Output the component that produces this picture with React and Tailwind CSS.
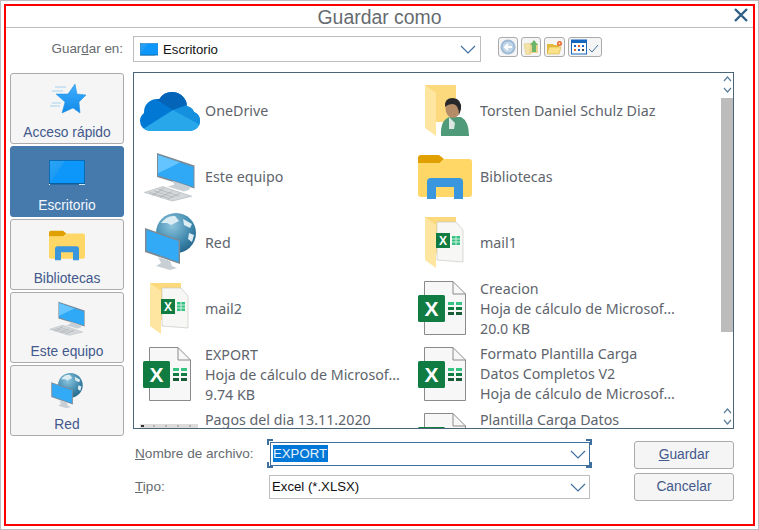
import React from "react";

const Chevron = () => (
  <svg width="16" height="9" viewBox="0 0 16 9" className="shrink-0">
    <polyline points="1,1 8,8 15,1" fill="none" stroke="#3f70a0" strokeWidth="1.2" />
  </svg>
);

const ScrollChevron = ({ up }) => (
  <svg width="9" height="6" viewBox="0 0 9 6">
    <polyline points={up ? "1,5 4.5,1 8,5" : "1,1 4.5,5 8,1"} fill="none" stroke="#5b7f9f" strokeWidth="1.2" />
  </svg>
);

const Desktop = ({ w = 36, h = 25 }) => (
  <svg width={w} height={h} viewBox="0 0 36 25">
    <defs>
      <linearGradient id="desk" x1="0" y1="0" x2="1" y2="1">
        <stop offset="0" stopColor="#2aa5f5" />
        <stop offset="1" stopColor="#0a8cf0" />
      </linearGradient>
    </defs>
    <rect x="0.5" y="0.5" width="35" height="23" fill="url(#desk)" stroke="#0b6cb5" />
    <polygon points="1,23 16,1 35,1 35,23" fill="#0d97fb" />
    <rect x="0" y="23" width="36" height="1.5" fill="#0a5f9f" />
    <rect x="0" y="24" width="1" height="1" fill="#fff" />
    <rect x="30" y="24" width="6" height="1" fill="#cfe6f7" />
  </svg>
);

const Computer = ({ w = 54, h = 50 }) => (
  <svg width={w} height={h} viewBox="0 0 55 52">
    <polygon points="14,1 53,14 53,38 14,26" fill="#7c8a94" />
    <polygon points="15,3 52,15.5 52,36.5 15,24.5" fill="#2fa8f5" />
    <polygon points="15,3 38,11 15,22" fill="#63c4ff" />
    <polygon points="30,30 48,36 48,39 42,41 25,36 32,34" fill="#c9d0d5" />
    <polygon points="1,42 20,36 50,46 30,51" fill="#d5d8da" stroke="#aab0b4" strokeWidth="0.6" />
    <path d="M6 42 L26 48 M11 40.5 L31 47 M16 39 L37 46 M9 45 L21 38 M17 47 L30 41 M25 49 L38 43" stroke="#a0a6aa" strokeWidth="0.6" />
  </svg>
);

const Network = ({ w = 55, h = 60 }) => (
  <svg width={w} height={h} viewBox="0 0 55 60">
    <defs>
      <radialGradient id="globe" cx="0.4" cy="0.3" r="0.8">
        <stop offset="0" stopColor="#8fc6df" />
        <stop offset="0.6" stopColor="#3f88ad" />
        <stop offset="1" stopColor="#1f5f85" />
      </radialGradient>
    </defs>
    <circle cx="33" cy="20" r="20" fill="url(#globe)" />
    <path d="M18 10 Q24 2 32 3 L36 8 L28 12 L24 10 Z M40 6 L49 11 L47 15 L41 12 Z M46 20 L51 22 L49 29 L45 26 Z" fill="#dcecf3" />
    <polygon points="2,15 37,27 37,51 2,39" fill="#7c8a94" />
    <polygon points="3.5,17 35.5,28 35.5,49 3.5,37.5" fill="#33aaf6" />
    <polygon points="15,44 27,48 29,53 34,55 27,57 13,53 18,50" fill="#c9d0d5" />
  </svg>
);

const Cloud = () => (
  <svg width="60" height="39" viewBox="0 0 60 39">
    <defs>
      <clipPath id="cloud">
        <circle cx="32" cy="15" r="15" />
        <circle cx="17" cy="20" r="13" />
        <circle cx="10" cy="29" r="10" />
        <circle cx="50" cy="29" r="10" />
        <circle cx="45" cy="24" r="10" />
        <rect x="10" y="15" width="40" height="24" />
      </clipPath>
    </defs>
    <g clipPath="url(#cloud)">
      <rect width="60" height="39" fill="#0078d4" />
      <polygon points="14,0 60,0 60,14 47,13 33,18 17,8" fill="#0364b8" />
      <polygon points="33,18 47,13 60,22 60,35" fill="#1490df" />
      <polygon points="33,18 60,33 60,39 8,39 3,37" fill="#28a8ea" />
    </g>
  </svg>
);

const Star = () => (
  <svg width="37" height="30" viewBox="0 0 37 30">
    <defs>
      <linearGradient id="star" x1="0" y1="0" x2="0" y2="1">
        <stop offset="0" stopColor="#3fb0ff" />
        <stop offset="1" stopColor="#1289e8" />
      </linearGradient>
    </defs>
    <path d="M6 3 H17 M3 7 H14 M3 19 H12 M1 22 H11" stroke="#a8d2ee" strokeWidth="1" />
    <polygon points="26,0 28,10 37,11 30,18 31,29 24,24 13,29 16,18 7,10 19,10" fill="url(#star)" stroke="#1c8fe0" strokeWidth="0.5" />
  </svg>
);

const Libraries = ({ w = 54, h = 44 }) => (
  <svg width={w} height={h} viewBox="0 0 54 44">
    <path d="M0 3 a3 3 0 0 1 3 -3 H21 L26 4 L21 9 H0 Z" fill="#dfa000" />
    <path d="M0 8 H22 L26 4 H51 a3 3 0 0 1 3 3 V39 a3 3 0 0 1 -3 3 H3 a3 3 0 0 1 -3 -3 Z" fill="#ffd766" />
    <path d="M9 44 V27 a4 4 0 0 1 4 -4 H41 a4 4 0 0 1 4 4 V44 H36 V32 H18 V44 Z" fill="#3a96dd" />
  </svg>
);

const FolderBack = () => (
  <>
    <polygon points="0,0 31,0 31,37 11,37" fill="#fcd97c" />
    <polygon points="0,0 11,8 11,51 0,43" fill="#fee6a0" />
  </>
);

const UserFolder = () => (
  <svg width="45" height="52" viewBox="0 0 45 52">
    <FolderBack />
    <path d="M16 51 Q15 36 24 32 H36 Q44 36 44 51 Z" fill="#4f9a78" />
    <polygon points="24,32 30,38 29,44 24,44" fill="#dbe7e2" />
    <ellipse cx="28" cy="24" rx="7.5" ry="9" fill="#b48c68" />
    <path d="M20 22 Q19 13 28 13 Q37 14 36 24 L34 30 Q34 20 28 19 Q23 19 20 22 Z" fill="#26282a" />
  </svg>
);

const XlsxFolder = () => (
  <svg width="40" height="52" viewBox="0 0 40 52">
    <FolderBack />
    <polygon points="12,5 31,5 38,13 38,45 12,43" fill="#f7f7f5" stroke="#c8c8c4" strokeWidth="0.7" />
    <rect x="11" y="16" width="14" height="15" fill="#107c41" />
    <text x="18" y="28" textAnchor="middle" fontSize="12" fontWeight="700" fill="#fff" fontFamily="Liberation Sans">X</text>
    <path d="M27 19 H35 V28 H27 Z" fill="#33c481" />
    <path d="M27 22 H35 M27 25 H35 M31 19 V28" stroke="#f7f7f5" strokeWidth="0.8" />
  </svg>
);

const Excel = () => (
  <svg width="48" height="54" viewBox="0 0 48 54" className="shrink-0 -translate-y-[1px]">
    <path d="M6.5 0.5 H35 L47.5 13 V53.5 H6.5 Z" fill="#f7f7f7" stroke="#8a8a8a" />
    <path d="M35 0.5 V13 H47.5" fill="none" stroke="#8a8a8a" />
    <rect x="0" y="14" width="27" height="27" rx="1.5" fill="#107c41" />
    <text x="13.5" y="34.5" textAnchor="middle" fontSize="21" fontWeight="700" fill="#fff" fontFamily="Liberation Sans">X</text>
    <rect x="30" y="21" width="6" height="3" fill="#33c481" />
    <rect x="38" y="21" width="6" height="3" fill="#33c481" />
    <rect x="30" y="26" width="6" height="3" fill="#107c41" />
    <rect x="38" y="26" width="6" height="3" fill="#107c41" />
    <rect x="30" y="31" width="6" height="3" fill="#185c37" />
    <rect x="38" y="31" width="6" height="3" fill="#185c37" />
  </svg>
);

const Ruler = () => (
  <svg width="58" height="54" viewBox="0 0 58 54" className="shrink-0 translate-y-[8px]">
    <rect x="0" y="2" width="58" height="50" fill="#f4f4f4" />
    <rect x="0" y="2" width="58" height="4" fill="#dcdcdc" />
    <rect x="1" y="3" width="3" height="2" fill="#333" />
    <path d="M14 3 V5 M26 3 V5 M38 3 V5 M50 3 V5" stroke="#888" strokeWidth="1" />
  </svg>
);

const SideButton = ({ label, active, children }) => (
  <div
    className={`h-[71px] rounded-[3px] border flex flex-col items-center ${
      active ? "bg-[#4679ac] border-[#4679ac] text-[#f2f7fb]" : "bg-[#f5f5f5] border-[#ababab] text-[#43598c]"
    }`}
  >
    <div className="h-[50px] w-full flex items-center justify-center">{children}</div>
    <div className="h-[18px] text-[13.8px] leading-[18px]">{label}</div>
  </div>
);

// top: the row runs past the bottom of the list, so its text hangs from the top
const FileItem = ({ icon, lines, top, raise }) => (
  <div className="h-[66px] flex items-center">
    <div className="w-[65px] shrink-0 flex items-center">{icon}</div>
    <div
      className={`text-[14.25px] leading-[20px] text-[#5e646c] whitespace-nowrap ${top ? "self-start pt-[2px]" : ""} ${
        raise ? "pb-[2px]" : ""
      }`}
    >
      {lines.map((line) => (
        <div key={line}>{line}</div>
      ))}
    </div>
  </div>
);

const ToolButton = ({ className, children }) => (
  <div className={`h-[20px] rounded-[3px] border border-[#ababab] bg-[#f5f5f5] flex items-center justify-center ${className}`}>
    {children}
  </div>
);

const Bracket = ({ className }) => <span className={`absolute w-[6px] h-[6px] border-[#3f6f9f] ${className}`} />;

export default function App() {
  return (
    <div className="w-[759px] h-[530px] bg-white border border-[#bdbdbd] p-[3px] font-['Liberation_Sans',sans-serif]">
      <div className="h-full border-2 border-[#ff0000] flex flex-col">
        {/* title */}
        <div className="h-[22px] shrink-0 border-b border-[#bdbdbd] relative flex items-center justify-center">
          <span className="text-[19.4px] leading-[20px] text-[#666b70]">Guardar como</span>
          <svg width="14" height="14" viewBox="0 0 14 14" className="absolute right-[5px] top-[2px]">
            <path d="M1 1 L13 13 M13 1 L1 13" stroke="#2f5f85" strokeWidth="2.4" />
          </svg>
        </div>

        {/* guardar en */}
        <div className="mt-[8px] h-[26px] flex items-center shrink-0">
          <div className="w-[117px] pt-[1px] text-right text-[13.4px] text-[#666b70]">
            Guar<span className="underline">d</span>ar en:
          </div>
          <div className="ml-[10px] w-[348px] h-[26px] border border-[#bdbdbd] flex items-center pl-[6px] pr-[4px] text-[13.2px] text-[#111]">
            <Desktop w={18} h={13} />
            <span className="ml-[5px] pt-[1px] flex-1">Escritorio</span>
            <Chevron />
          </div>
          <div className="ml-[17px] flex gap-[3px] self-start mt-[1px]">
            <ToolButton className="w-[20px]">
              <svg width="16" height="16" viewBox="0 0 16 16">
                <circle cx="8" cy="8" r="7.5" fill="#9dbad6" />
                <circle cx="8" cy="8" r="5.5" fill="#c3d6e8" />
                <path d="M12 8 H5 M8 5 L5 8 L8 11" fill="none" stroke="#fff" strokeWidth="2" />
              </svg>
            </ToolButton>
            <ToolButton className="w-[20px]">
              <svg width="16" height="16" viewBox="0 0 16 16">
                <path d="M1 5 L8 4 V15 L3 16 Z" fill="#f4e2a6" stroke="#d8c684" strokeWidth="0.5" />
                <path d="M8 5 H15 V14 H6 Z" fill="#ead38a" />
                <path d="M11 1 L15 6 H13 V13 H9 V6 H7 Z" fill="#6db56b" />
              </svg>
            </ToolButton>
            <ToolButton className="w-[21px]">
              <svg width="17" height="15" viewBox="0 0 17 15">
                <path d="M1 4 H7 L8 5 H13 V13 H1 Z" fill="#e3b93e" />
                <path d="M3 7 H15 L13 14 H1 Z" fill="#fbe28a" stroke="#cfa52f" strokeWidth="0.5" />
                <circle cx="13.5" cy="3.5" r="2.5" fill="#e8642c" />
                <circle cx="13.5" cy="3.5" r="1" fill="#ffe9b0" />
              </svg>
            </ToolButton>
            <ToolButton className="w-[34px] justify-start pl-[2px]">
              <svg width="29" height="16" viewBox="0 0 29 16">
                <rect x="0.5" y="1" width="15" height="14" fill="#fff" stroke="#1667c0" />
                <rect x="0.5" y="1" width="15" height="3" fill="#1667c0" />
                <rect x="3" y="6" width="2" height="2" fill="#1667c0" />
                <rect x="7" y="6" width="2" height="2" fill="#e8642c" />
                <rect x="11" y="6" width="2" height="2" fill="#1667c0" />
                <rect x="3" y="10" width="2" height="2" fill="#e8642c" />
                <rect x="7" y="10" width="2" height="2" fill="#1667c0" />
                <rect x="11" y="10" width="2" height="2" fill="#444" />
                <polyline points="18,10 21,13 27,6" fill="none" stroke="#3f70a0" strokeWidth="1" />
              </svg>
            </ToolButton>
          </div>
        </div>

        <div className="mt-[10px] flex flex-1 min-h-0">
          {/* accesos */}
          <div className="ml-[4px] w-[114px] pt-[1px] flex flex-col gap-[2px] shrink-0">
            <SideButton label="Acceso rápido"><Star /></SideButton>
            <SideButton label="Escritorio" active><Desktop /></SideButton>
            <SideButton label="Bibliotecas"><Libraries w={36} h={31} /></SideButton>
            <SideButton label="Este equipo"><Computer w={37} h={35} /></SideButton>
            <SideButton label="Red"><Network w={34} h={37} /></SideButton>
          </div>

          <div className="ml-[9px] w-[601px]">
            {/* lista */}
            <div className="h-[357px] border border-[#4a6478] flex overflow-hidden font-['Noto_Sans',sans-serif]">
              <div className="w-[587px] shrink-0 overflow-hidden pl-[6px] pt-[5px] grid grid-cols-[275px_275px] auto-rows-[66px] content-start">
                <FileItem icon={<Cloud />} lines={["OneDrive"]} />
                <FileItem icon={<div className="ml-[10px]"><UserFolder /></div>} lines={["Torsten Daniel Schulz Diaz"]} />
                <FileItem icon={<div className="ml-[3px]"><Computer /></div>} lines={["Este equipo"]} />
                <FileItem icon={<div className="ml-[3px]"><Libraries /></div>} lines={["Bibliotecas"]} />
                <FileItem icon={<div className="ml-[3px]"><Network /></div>} lines={["Red"]} />
                <FileItem icon={<div className="ml-[10px]"><XlsxFolder /></div>} lines={["mail1"]} />
                <FileItem icon={<div className="ml-[10px]"><XlsxFolder /></div>} lines={["mail2"]} />
                <FileItem icon={<div className="ml-[3px]"><Excel /></div>} lines={["Creacion", "Hoja de cálculo de Microsof...", "20.0 KB"]} />
                <FileItem icon={<div className="ml-[3px]"><Excel /></div>} lines={["EXPORT", "Hoja de cálculo de Microsof...", "9.74 KB"]} />
                <FileItem raise icon={<div className="ml-[3px]"><Excel /></div>} lines={["Formato Plantilla Carga", "Datos Completos V2", "Hoja de cálculo de Microsof..."]} />
                <FileItem top icon={<Ruler />} lines={["Pagos del dia 13.11.2020"]} />
                <FileItem top icon={<div className="ml-[3px]"><Excel /></div>} lines={["Plantilla Carga Datos"]} />
              </div>
              <div className="flex-1 flex flex-col items-center">
                <div className="h-[25px] pt-[3px] flex flex-col items-center gap-[5px]">
                  <ScrollChevron up />
                  <ScrollChevron />
                </div>
                <div className="w-full h-[234px] bg-[#bcbcbc]" />
                <div className="mt-auto h-[20px] flex flex-col items-center gap-[5px]">
                  <ScrollChevron up />
                  <ScrollChevron />
                </div>
              </div>
            </div>

            {/* nombre y tipo */}
            <div className="mt-[12px] flex text-[13.6px]">
              <div className="w-[501px] pl-[2px] pt-[1px] flex flex-col gap-[9px]">
                <div className="h-[24px] flex items-center">
                  <div className="w-[135px] pt-[1px] text-[#666b70]">
                    <span className="underline">N</span>ombre de archivo:
                  </div>
                  <div className="relative w-[320px] h-[24px] border border-[#3f6f9f] flex items-center pl-[2px] pr-[3px] text-[13.2px]">
                    <span className="flex-1">
                      <span className="bg-[#0078d7] text-[#e8f2fb] inline-block leading-[17px] pr-[1px]">EXPORT</span>
                    </span>
                    <Chevron />
                    <Bracket className="left-[-4px] top-[-4px] border-l-2 border-t-2" />
                    <Bracket className="right-[-3px] top-[-4px] border-r-2 border-t-2" />
                    <Bracket className="left-[-4px] bottom-[-3px] border-l-2 border-b-2" />
                    <Bracket className="right-[-3px] bottom-[-3px] border-r-2 border-b-2" />
                  </div>
                </div>
                <div className="h-[24px] flex items-center">
                  <div className="w-[134px] pt-[1px] text-[#666b70]">
                    <span className="underline">T</span>ipo:
                  </div>
                  <div className="w-[321px] h-[24px] border border-[#bdbdbd] flex items-center pl-[2px] pr-[3px] text-[13.2px] text-[#111]">
                    <span className="flex-1">Excel (*.XLSX)</span>
                    <Chevron />
                  </div>
                </div>
              </div>
              <div className="w-[100px] flex flex-col gap-[4px] text-[13.8px] text-[#43598c]">
                <div className="h-[28px] pt-[1px] rounded-[3px] border border-[#ababab] bg-[#f5f5f5] flex items-center justify-center">
                  <span><span className="underline">G</span>uardar</span>
                </div>
                <div className="h-[28px] pt-[1px] rounded-[3px] border border-[#ababab] bg-[#f5f5f5] flex items-center justify-center">
                  Cancelar
                </div>
              </div>
            </div>
          </div>
        </div>
      </div>
    </div>
  );
}
